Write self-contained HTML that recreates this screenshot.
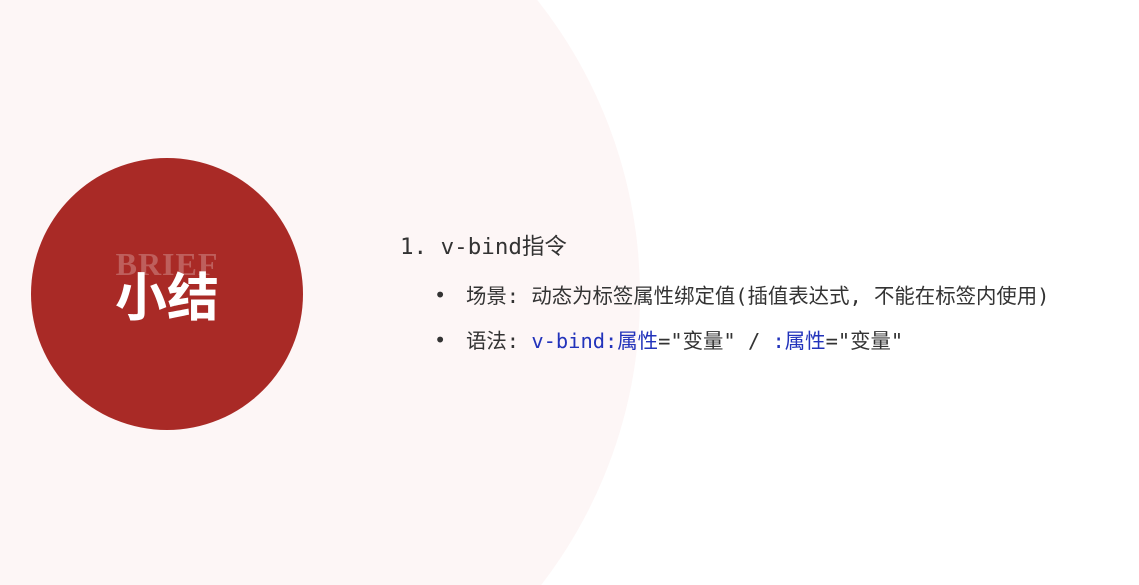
<!DOCTYPE html>
<html><head><meta charset="utf-8"><style>
html,body{margin:0;width:1139px;height:585px;overflow:hidden}
body{background:#fff;position:relative;font-family:"DejaVu Sans Mono","Liberation Mono","Noto Sans CJK SC",monospace;color:#333}
.wrap{position:absolute;left:0;top:0;width:1139px;height:585px;overflow:hidden}
.big{position:absolute;left:-310px;top:-180px;width:950px;height:950px;border-radius:50%;background:#fdf6f6}
.c{position:absolute;left:31px;top:158px;width:272px;height:272px;border-radius:50%;background:#a92a26}
.brief{position:absolute;left:0;width:272px;top:88px;text-align:center;font:bold 32px "Liberation Serif",serif;color:rgba(255,255,255,0.25);letter-spacing:1px}
.t{position:absolute;left:0;width:272px;top:102px;text-align:center;font:bold 52px "Noto Sans CJK SC",sans-serif;color:#fff;line-height:1.3}
.l{position:absolute;white-space:nowrap;font-size:20.4px}
.b{color:#2233bb}
</style></head><body>
<div class="wrap"><div class="big"></div></div>
<div class="c"><div class="brief">BRIEF</div><div class="t">小结</div></div>
<div class="l" style="left:400px;top:229px;font-size:22.5px">1. v-bind指令</div>
<div class="l" style="left:434px;top:283px">•</div>
<div class="l" style="left:466px;top:279px">场景: 动态为标签属性绑定值(插值表达式, 不能在标签内使用)</div>
<div class="l" style="left:434px;top:328px">•</div>
<div class="l" style="left:466px;top:324px">语法: <span class="b">v-bind:属性</span>="变量" / <span class="b">:属性</span>="变量"</div>
</body></html>
